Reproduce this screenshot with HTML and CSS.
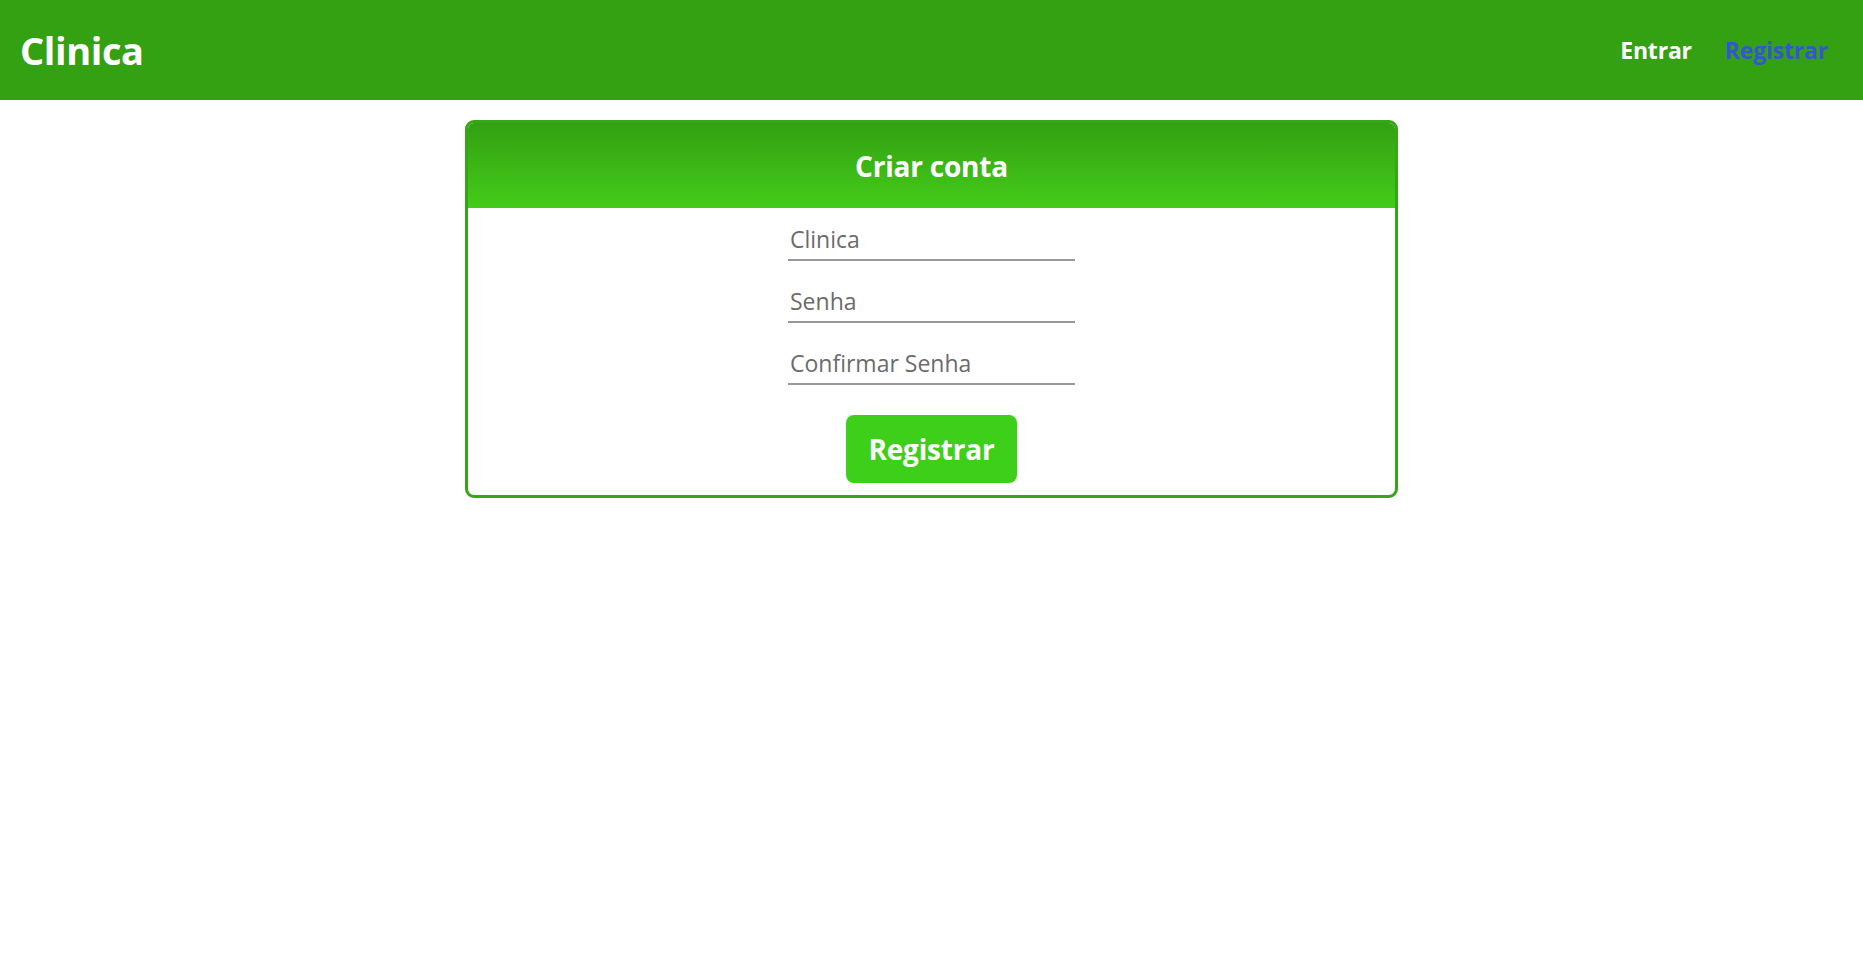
FILE: index.html
```html
<!DOCTYPE html>
<html lang="pt">
<head>
<meta charset="utf-8">
<title>Clinica</title>
<link rel="stylesheet" href="styles.css">
</head>
<body>
<header class="topbar">
  <div class="logo">Clinica</div>
  <nav class="nav">
    <a class="nav-link" href="#">Entrar</a>
    <a class="nav-link active" href="#">Registrar</a>
  </nav>
</header>
<main class="main">
  <section class="card">
    <div class="card-header">Criar conta</div>
    <form class="card-form">
      <input class="field" type="text" placeholder="Clinica">
      <input class="field" type="password" placeholder="Senha">
      <input class="field" type="password" placeholder="Confirmar Senha">
      <button class="btn" type="button">Registrar</button>
    </form>
  </section>
</main>
</body>
</html>
```
FILE: styles.css
```css
* { box-sizing: border-box; }
body {
  margin: 0;
  font-family: "Open Sans", "Noto Sans", sans-serif;
  background: #fff;
}
.topbar {
  height: 100px;
  background: #33a112;
  display: flex;
  align-items: center;
  justify-content: space-between;
  padding: 0 35px 0 20px;
}
.logo {
  color: #fff;
  font-weight: 700;
  font-size: 38px;
  letter-spacing: -0.4px;
}
.nav {
  display: flex;
  gap: 33px;
}
.nav-link {
  color: #fff;
  font-weight: 700;
  font-size: 23px;
  text-decoration: none;
  letter-spacing: -0.2px;
}
.nav-link.active { color: #3457cf; }
.main {
  display: flex;
  justify-content: center;
  padding-top: 20px;
}
.card {
  width: 933px;
  border: 3px solid #35a615;
  border-radius: 9px;
  overflow: hidden;
}
.card-header {
  height: 85px;
  background: linear-gradient(to bottom, #33a012, #44cc1a);
  color: #fff;
  font-weight: 700;
  font-size: 28px;
  display: flex;
  align-items: center;
  justify-content: center;
  letter-spacing: -0.2px;
}
.card-form {
  display: flex;
  flex-direction: column;
  align-items: center;
  padding: 13px 0 12px;
}
.field {
  width: 287px;
  height: 40px;
  border: none;
  border-bottom: 2px solid #999;
  padding: 0 2px 3px;
  margin-bottom: 22px;
  font-family: inherit;
  font-size: 23px;
  color: #333;
  outline: none;
}
.field::placeholder { color: #6b6b6b; }
.btn {
  margin-top: 8px;
  width: 171px;
  height: 68px;
  border: none;
  border-radius: 8px;
  background: #3ecf1a;
  color: #fff;
  font-family: inherit;
  font-weight: 700;
  font-size: 28px;
  letter-spacing: -0.2px;
}
```
